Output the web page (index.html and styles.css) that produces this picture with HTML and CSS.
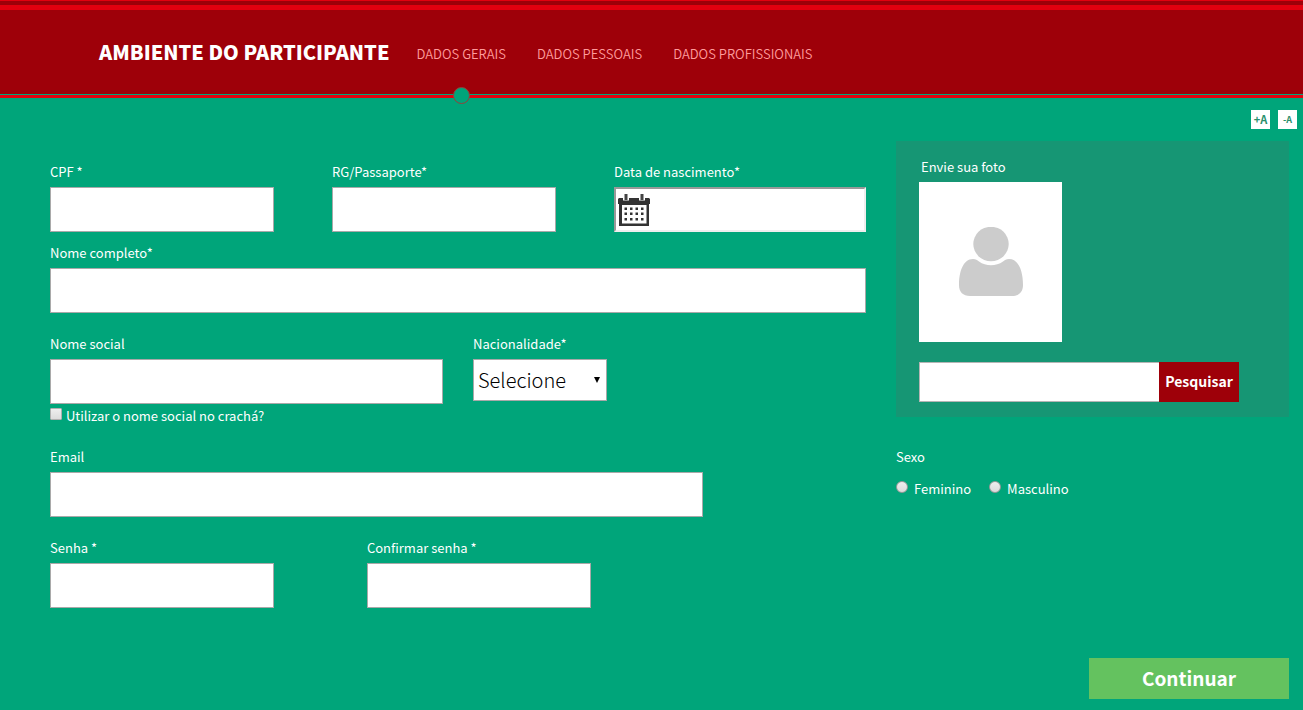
FILE: index.html
```html
<!DOCTYPE html>
<html lang="pt-BR">
<head>
<meta charset="utf-8">
<meta name="viewport" content="width=device-width, initial-scale=1">
<title>Ambiente do Participante</title>
<link rel="stylesheet" href="styles.css">
</head>
<body>
<header class="header">
  <h1 class="brand">AMBIENTE DO PARTICIPANTE</h1>
  <nav class="nav">
    <a class="nav-link active" href="#gerais">DADOS GERAIS</a>
    <a class="nav-link" href="#pessoais">DADOS PESSOAIS</a>
    <a class="nav-link" href="#profissionais">DADOS PROFISSIONAIS</a>
  </nav>
</header>
<div class="font-tools">
  <button class="font-btn" type="button">+A</button>
  <button class="font-btn small" type="button">-A</button>
</div>
<form class="page">
  <div class="main">
    <div class="row thirds">
      <div class="field"><label for="cpf">CPF *</label><input class="box short" id="cpf" type="text"></div>
      <div class="field"><label for="rg">RG/Passaporte*</label><input class="box short" id="rg" type="text"></div>
      <div class="field"><label for="nasc">Data de nascimento*</label>
        <div class="date-box">
          <svg class="calendar" viewBox="0 0 32 32" aria-hidden="true">
            <path fill="#333" d="M1 4h30l1 1v5h-1v22H1V10H0V5zM4 11v18.500h24.500V11z"/>
            <path fill="#fff" d="M5 3h6v3.500H5zM21 3h6v3.500h-6z"/>
            <path fill="#444" d="M6.500 0h3v6h-3zM22.500 0h3v6h-3z"/>
            <path fill="#333" d="M6.500 13.500h2.500v2.500H6.500zM12 13.500h2.500v2.500H12zM17.500 13.500h2.500v2.500h-2.500zM23 13.500h2.500v2.500H23zM6.500 18.500h2.500v2.500H6.500zM12 18.500h2.500v2.500H12zM17.500 18.500h2.500v2.500h-2.500zM23 18.500h2.500v2.500H23zM6.500 24h2.500v2.500H6.500zM12 24h2.500v2.500H12zM17.500 24h2.500v2.500h-2.500zM23 24h2.500v2.500H23z"/>
          </svg>
          <input class="date-input" id="nasc" type="text">
        </div>
      </div>
    </div>
    <div class="row name-row">
      <div class="field"><label for="nome">Nome completo*</label><input class="box" id="nome" type="text"></div>
    </div>
    <div class="row halves">
      <div class="field"><label for="social">Nome social</label><input class="box" id="social" type="text">
        <div class="check"><input class="tick" id="cracha" type="checkbox"><label for="cracha">Utilizar o nome social no crachá?</label></div>
      </div>
      <div class="field"><label for="nac">Nacionalidade*</label>
        <select class="select" id="nac"><option>Selecione</option></select>
      </div>
    </div>
    <div class="row email-row">
      <div class="field"><label for="email">Email</label><input class="box" id="email" type="email"></div>
    </div>
    <div class="row passwords">
      <div class="field"><label for="senha">Senha *</label><input class="box short" id="senha" type="password"></div>
      <div class="field"><label for="confirma">Confirmar senha *</label><input class="box short" id="confirma" type="password"></div>
    </div>
  </div>
  <aside class="side">
    <div class="photo-card">
      <label class="photo-label" for="foto">Envie sua foto</label>
      <div class="photo">
        <svg class="person" viewBox="0 0 64 70" aria-hidden="true">
          <ellipse cx="32" cy="17" rx="17.7" ry="17.2" fill="#ccc"/>
          <path fill="#ccc" d="M14 32C17 32 18 33 20 34.500C27 39.500 37 39.500 44 34.500C46 33 47 32 50 32C60 32 64 45 64 58C64 65 60 69 53 69H11C4 69 0 65 0 58C0 45 4 32 14 32Z"/>
        </svg>
      </div>
      <div class="search"><input class="search-input" id="foto" type="text"><button class="search-btn" type="button">Pesquisar</button></div>
    </div>
    <fieldset class="sex">
      <legend>Sexo</legend>
      <div class="options">
        <label class="option"><input class="radio" type="radio" name="sexo">Feminino</label>
        <label class="option"><input class="radio" type="radio" name="sexo">Masculino</label>
      </div>
    </fieldset>
  </aside>
  <div class="actions"><button class="continue" type="submit">Continuar</button></div>
</form>
</body>
</html>
```
FILE: styles.css
```css
* { box-sizing: border-box; }
body {
  margin: 0;
  background: #00a57a;
  color: #fff;
  font-family: "Noto Sans CJK SC", "Noto Sans", sans-serif;
  font-size: 13px;
  font-weight: 400;
  line-height: 20px;
}
button, input, select { font: inherit; margin: 0; border-radius: 0; }
button { cursor: pointer; border: 0; padding: 0; }

.header {
  display: flex;
  align-items: stretch;
  height: 98px;
  padding: 10px 99px 0;
  border-bottom: 3px solid #e3000f;
  background: linear-gradient(#e3000f 1px, #9e0009 1px, #9e0009 5px, #e3000f 5px, #e3000f 10px, #9e0009 10px, #9e0009 94px, #00a57a 94px);
}
.brand {
  margin: 0 27px 0 0;
  font-size: 20px;
  font-weight: 900;
  line-height: 84px;
  white-space: nowrap;
}
.nav { display: flex; gap: 31px; }
.nav-link {
  position: relative;
  color: #ff9c9c;
  font-weight: 350;
  line-height: 88px;
  text-decoration: none;
  white-space: nowrap;
}
.active::after {
  content: "";
  position: absolute;
  left: 50%;
  bottom: -9px;
  width: 15px;
  height: 15px;
  margin-left: -8px;
  border: 1px solid #96403a;
  border-radius: 50%;
  background: #00a57a;
}

.font-tools { display: flex; justify-content: flex-end; gap: 8px; padding: 12px 6px 0; }
.font-btn {
  width: 19px;
  height: 19px;
  background: #fff;
  color: #2a8f6c;
  font-size: 11px;
  font-weight: 700;
  line-height: 19px;
}
.font-btn.small { font-size: 9px; }

.page {
  display: grid;
  grid-template-columns: 816fr 393fr;
  column-gap: 30px;
  padding: 12px 14px 11px 50px;
}
.main { padding-top: 16px; }
.row { display: grid; column-gap: 30px; margin-bottom: 16px; }
.thirds { grid-template-columns: repeat(3, 1fr); margin-bottom: 6px; }
.halves { grid-template-columns: repeat(2, 1fr); }
.email-row { width: 80%; }
.passwords { grid-template-columns: repeat(2, 1fr); width: 74%; margin-bottom: 0; }
.field { display: flex; flex-direction: column; align-items: flex-start; min-width: 0; }
.field > label { line-height: 30px; }
.box {
  width: 100%;
  height: 45px;
  padding: 0 8px;
  border: 1px solid #a9a9a9;
  background: #fff;
  font-size: 20px;
}
.short { max-width: 224px; }
.date-box {
  display: flex;
  align-items: center;
  width: 100%;
  height: 45px;
  padding: 0 2px;
  border: 2px solid;
  border-color: #999 #eee #eee #999;
  background: #fff;
}
.calendar { flex: none; width: 32px; height: 32px; }
.date-input { flex: 1; min-width: 0; height: 40px; border: 0; background: transparent; font-size: 20px; outline: 0; }
.check { display: flex; gap: 4px; height: 22px; }
.check label { line-height: 24px; }
.tick, .radio {
  appearance: none;
  flex: none;
  width: 12px;
  height: 12px;
  border: 1px solid #b0b0b0;
  background: linear-gradient(#eee, #dcdcdc);
}
.tick { margin-top: 4px; border-radius: 1px; }
.radio { border-color: #999; border-radius: 50%; }
.select {
  appearance: none;
  width: 134px;
  height: 42px;
  padding: 0 4px;
  border: 1px solid #a9a9a9;
  background: #fff url("data:image/svg+xml,%3Csvg xmlns='http://www.w3.org/2000/svg' width='6' height='6'%3E%3Cpath d='M0 0h6L3 6z'/%3E%3C/svg%3E") no-repeat right 6px center;
  color: #000;
  font-size: 20px;
  font-weight: 300;
}

.photo-card { padding: 16px 23px 15px; background: #169674; }
.photo-label { display: block; padding-left: 2px; margin-bottom: 5px; }
.photo {
  display: flex;
  align-items: center;
  justify-content: center;
  width: 143px;
  height: 160px;
  margin-bottom: 20px;
  background: #fff;
}
.person { width: 64px; height: 70px; }
.search { display: flex; max-width: 320px; }
.search-input { flex: 1; min-width: 0; height: 40px; padding: 0 8px; border: 1px solid #b5b5b5; border-right: 0; background: #fff; }
.search-btn { width: 80px; height: 40px; padding-bottom: 2px; background: #9e0009; color: #fff; font-size: 14px; font-weight: 700; }

.sex { margin: 30px 0 0; padding: 0; border: 0; }
.sex legend { padding: 0; }
.options { display: flex; gap: 18px; padding-top: 12px; }
.option { display: flex; gap: 6px; }
.radio { margin-top: 2px; }
.actions { grid-column: 1 / -1; display: flex; justify-content: flex-end; padding-top: 50px; }
.continue { width: 200px; height: 41px; padding-bottom: 2px; background: #64c25f; color: #fff; font-size: 19px; font-weight: 700; }
```
